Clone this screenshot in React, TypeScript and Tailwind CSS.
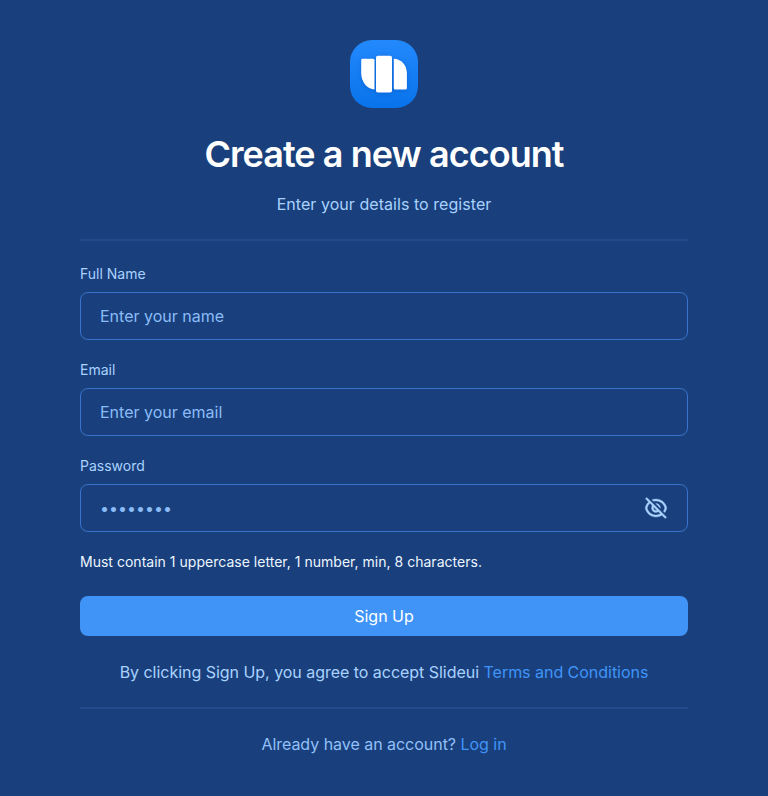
import React from 'react';
import { RiEyeOffLine } from 'react-icons/ri';

function Logo() {
  return (
    <svg width="68" height="68" viewBox="0 0 68 68" className="block" aria-hidden="true">
      <defs>
        <linearGradient id="tile" x1="0" y1="0" x2="0" y2="1">
          <stop offset="0" stopColor="#2389fd" />
          <stop offset="1" stopColor="#0873eb" />
        </linearGradient>
      </defs>
      <rect width="68" height="68" rx="22" fill="url(#tile)" />
      <g fill="white" className="drop-shadow-[0_1px_2px_rgba(0,60,160,0.35)]">
        <path d="M12.5 18.7H23Q24.5 18.7 24.5 20.2V49.4C17 49 11.2 42 11.2 33V20Q11.2 18.7 12.5 18.7Z" />
        <rect x="26" y="15.7" width="16" height="36.8" rx="1.8" />
        <path d="M43.8 18.8C51 19 56.9 25 56.9 33.5V48Q56.9 49.5 55.4 49.5H45.2Q43.8 49.5 43.8 48Z" />
      </g>
    </svg>
  );
}

type FieldProps = { label: string; type: string; placeholder: string; children?: React.ReactNode };

function Field({ label, type, placeholder, children }: FieldProps) {
  return (
    <label className="block">
      <span className="block h-5 text-sm leading-5 text-[#a9d2ff]">{label}</span>
      <span className="mt-2 flex h-12 items-center rounded-lg border border-[#3973cb] pr-[19px] pl-[19px]">
        <input
          type={type}
          placeholder={placeholder}
          className="min-w-0 flex-1 bg-transparent text-base leading-6 outline-none placeholder:text-[#8bbcf8]"
        />
        {children}
      </span>
    </label>
  );
}

export default function App() {
  return (
    <main className="flex h-[796px] w-full flex-col bg-[#19407c] px-20 pt-10 font-['Inter','Liberation_Sans',sans-serif] text-[#a9d2ff]">
      <header className="flex flex-col items-center">
        <Logo />
        <h1 className="mt-6 text-4xl leading-[44px] font-semibold tracking-[-0.95px] text-white">Create a new account</h1>
        <p className="mt-4 text-base leading-6 tracking-[0.05px]">Enter your details to register</p>
      </header>
      <hr className="mt-[23px] h-0.5 border-0 bg-[#234b8b]" />
      <form className="mt-[23px] flex flex-col" onSubmit={(e) => e.preventDefault()}>
        <div className="flex flex-col gap-5">
          <Field label="Full Name" type="text" placeholder="Enter your name" />
          <Field label="Email" type="email" placeholder="Enter your email" />
          <Field label="Password" type="password" placeholder="••••••••">
            <button type="button" aria-label="Show password">
              <RiEyeOffLine size={24} className="stroke-[#a9d2ff] stroke-[0.3] text-[#a9d2ff]" />
            </button>
          </Field>
        </div>
        <p className="mt-5 text-sm leading-5 tracking-[0.02px] text-[#edf6ff]">Must contain 1 uppercase letter, 1 number, min, 8 characters.</p>
        <button type="submit" className="mt-6 h-10 rounded-lg bg-[#4094f8] text-base leading-6 text-white">
          Sign Up
        </button>
      </form>
      <p className="mt-6 text-center text-base leading-6 tracking-[-0.03px]">
        By clicking Sign Up, you agree to accept Slideui{' '}
        <a href="#terms" className="text-[#4094f8]">Terms and Conditions</a>
      </p>
      <hr className="mt-[23px] h-0.5 border-0 bg-[#234b8b]" />
      <p className="mt-[23px] text-center text-base leading-6 tracking-[-0.03px] text-[#91c0fa]">
        Already have an account?{' '}
        <a href="#login" className="text-[#4094f8]">Log in</a>
      </p>
    </main>
  );
}
